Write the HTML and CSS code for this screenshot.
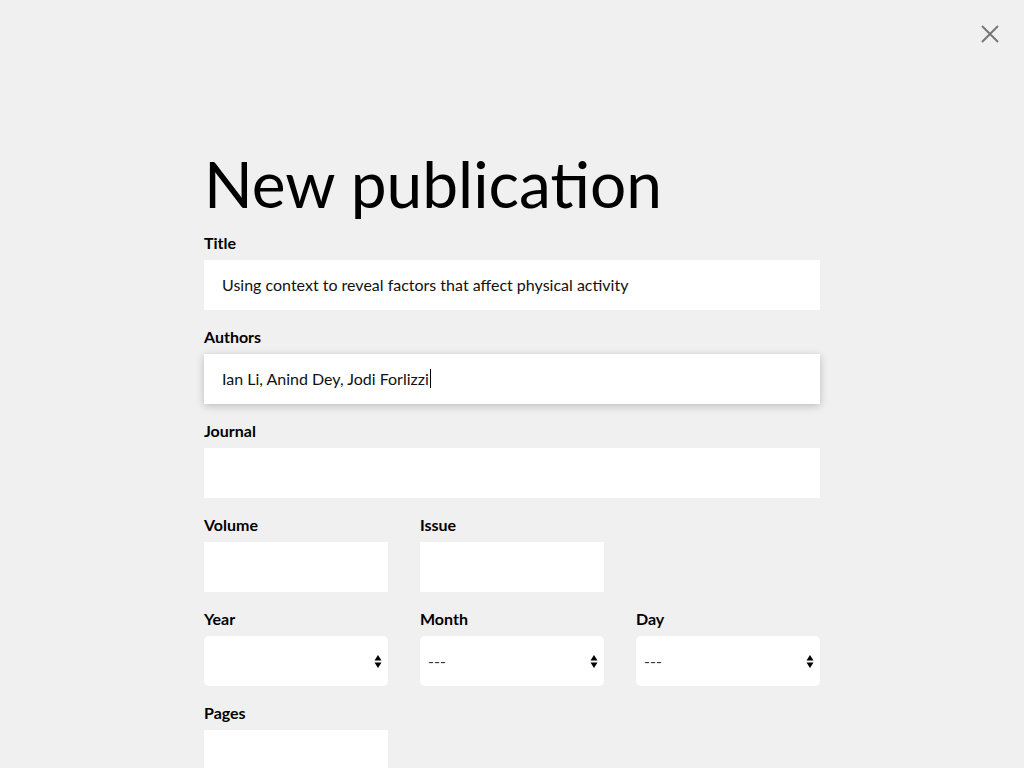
FILE: index.html
```html
<!DOCTYPE html>
<html lang="en">
<head>
<meta charset="utf-8">
<title>New publication</title>
<link rel="stylesheet" href="styles.css">
</head>
<body>
<button class="close" aria-label="Close">
  <svg width="18" height="18" viewBox="0 0 18 18"><path d="M1 1 L17 17 M17 1 L1 17" stroke="#777" stroke-width="2" fill="none"/></svg>
</button>
<main class="page">
  <h1 class="heading">New publication</h1>
  <div class="field">
    <label class="label">Title</label>
    <input class="input" type="text" value="Using context to reveal factors that affect physical activity">
  </div>
  <div class="field">
    <label class="label">Authors</label>
    <div class="input input-focused">Ian Li, Anind Dey, Jodi Forlizzi<span class="caret"></span></div>
  </div>
  <div class="field">
    <label class="label">Journal</label>
    <input class="input" type="text">
  </div>
  <div class="row">
    <div class="field">
      <label class="label">Volume</label>
      <input class="input" type="text">
    </div>
    <div class="field">
      <label class="label">Issue</label>
      <input class="input" type="text">
    </div>
  </div>
  <div class="row">
    <div class="field">
      <label class="label">Year</label>
      <select class="input select"><option></option></select>
    </div>
    <div class="field">
      <label class="label">Month</label>
      <select class="input select"><option>---</option></select>
    </div>
    <div class="field">
      <label class="label">Day</label>
      <select class="input select"><option>---</option></select>
    </div>
  </div>
  <div class="row">
    <div class="field">
      <label class="label">Pages</label>
      <input class="input" type="text">
    </div>
  </div>
</main>
</body>
</html>
```
FILE: styles.css
```css
html, body {
  margin: 0;
  padding: 0;
  background: #f0f0f0;
  font-family: Lato, "Liberation Sans", sans-serif;
  color: #000;
  overflow: hidden;
  height: 768px;
}

.close {
  position: absolute;
  top: 25px;
  right: 25px;
  width: 18px;
  height: 18px;
  padding: 0;
  border: 0;
  background: none;
  cursor: pointer;
}
.close svg { display: block; }

.page {
  width: 616px;
  margin: 0 auto;
  padding-top: 145px;
  display: flex;
  flex-direction: column;
  gap: 17px;
}

.heading {
  margin: 0 0 -6px 0;
  font-size: 64px;
  font-weight: 400;
  line-height: 77px;
  letter-spacing: 0;
}

.field {
  display: flex;
  flex-direction: column;
}

.label {
  font-size: 16px;
  font-weight: 700;
  line-height: 20px;
  margin-bottom: 7px;
}

.input {
  box-sizing: border-box;
  height: 50px;
  width: 100%;
  border: 0;
  outline: none;
  background: #fff;
  padding: 0 18px 2px 18px;
  font-family: Lato, "Liberation Sans", sans-serif;
  font-size: 16px;
  color: #111;
  display: flex;
  align-items: center;
}

.input-focused {
  box-shadow: 0 2px 8px rgba(0, 0, 0, 0.22);
}

.caret {
  display: inline-block;
  width: 1px;
  height: 19px;
  background: #000;
  margin-left: 1px;
}

.row {
  display: grid;
  grid-template-columns: 184px 184px 184px;
  column-gap: 32px;
}

.select {
  -webkit-appearance: none;
  appearance: none;
  border-radius: 5px;
  padding: 0 8px 2px 8px;
  color: #333;
  background-color: #fff;
  background-image: url("data:image/svg+xml;utf8,<svg xmlns='http://www.w3.org/2000/svg' width='8' height='13' viewBox='0 0 8 13'><path d='M4 0 L7.5 5.5 L0.5 5.5 Z M4 13 L7.5 7.5 L0.5 7.5 Z' fill='%23000'/></svg>");
  background-repeat: no-repeat;
  background-position: right 6px center;
}
```
